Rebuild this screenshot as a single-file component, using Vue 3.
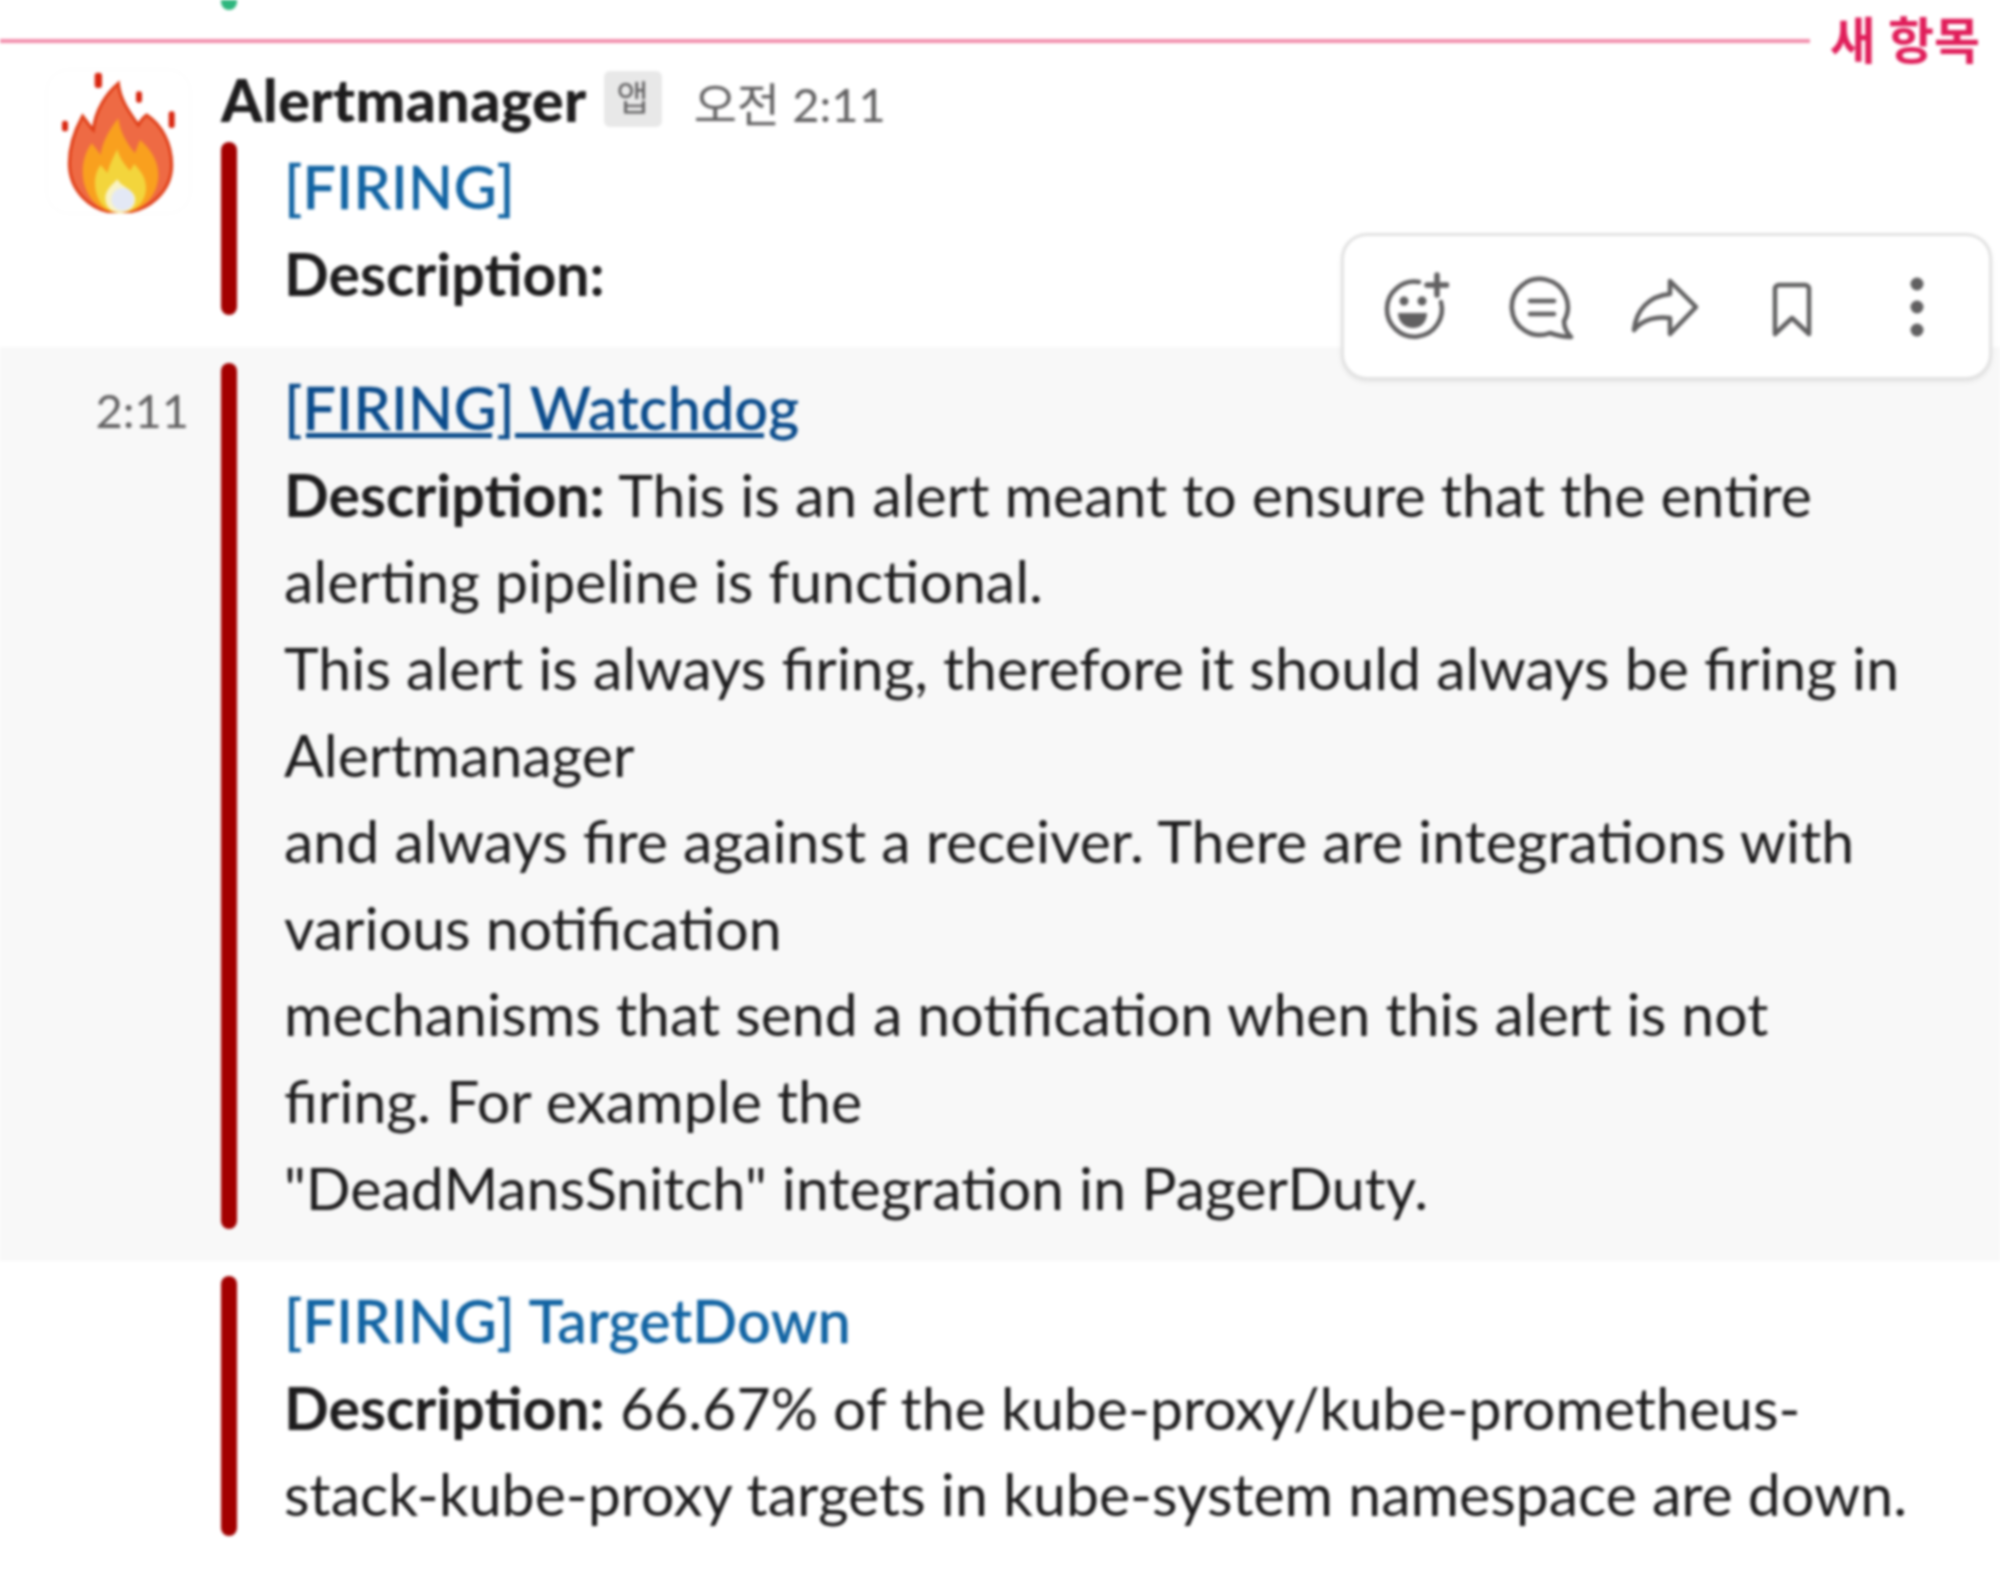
<template>
  <div class="page">
    <div class="prev-bar"></div>

    <div class="divider">
      <span class="divider-line"></span>
      <span class="divider-label">새 항목</span>
    </div>

    <div class="msg msg-first">
      <div class="gutter">
        <div class="avatar">
          <svg viewBox="51 60 429 429" width="143" height="143">
            <g fill="#d8260f">
              <rect x="194" y="68" width="22" height="46" rx="9" />
              <rect x="318" y="124" width="18" height="34" rx="8" />
              <rect x="96" y="212" width="18" height="32" rx="8" />
              <rect x="416" y="184" width="18" height="50" rx="8" />
            </g>
            <path fill="#ee6a44" stroke="#df3d17" stroke-width="9" d="M268 488C180 488 118 420 118 340C118 290 135 240 158 198C170 215 180 230 190 240C195 180 230 130 265 100C270 150 300 190 325 225C332 212 340 202 350 195C395 225 425 280 425 345C425 425 355 488 268 488Z" />
            <path fill="#f9a01e" d="M270 488C200 488 158 430 158 365C158 330 170 300 185 280C195 292 205 305 212 315C215 280 240 235 265 205C270 250 295 285 315 310C320 295 325 282 330 270C365 300 385 335 385 375C385 440 335 488 270 488Z" />
            <path fill="#f3d53c" d="M270 488C225 488 195 450 195 400C195 380 200 360 212 345C220 355 228 362 232 370C238 345 250 320 262 298C268 325 285 345 300 362C305 355 308 350 312 342C335 365 348 385 348 415C348 455 315 488 270 488Z" />
            <path fill="#f9f3c4" d="M270 488C240 488 226 466 226 444C226 424 240 410 262 388C272 410 316 420 316 448C316 470 298 488 270 488Z" />
            <circle cx="278" cy="448" r="34" fill="#e3e8f5" />
          </svg>
        </div>
      </div>
      <div class="body">
        <div class="head">
          <span class="name">Alertmanager</span>
          <span class="badge">앱</span>
          <span class="time">오전 2:11</span>
        </div>
        <div class="attach">
          <div class="bar"></div>
          <div class="text">
            <a class="link">[FIRING]</a>
            <p><b>Description:</b></p>
          </div>
        </div>
      </div>
    </div>

    <div class="msg msg-hover">
      <div class="gutter">
        <span class="stamp">2:11</span>
      </div>
      <div class="body">
        <div class="attach">
          <div class="bar"></div>
          <div class="text">
            <a class="link link-hover">[FIRING] Watchdog</a>
            <p>
              <b>Description:</b> This is an alert meant to ensure that the entire alerting pipeline is functional.<br>
              This alert is always firing, therefore it should always be firing in Alertmanager<br>
              and always fire against a receiver. There are integrations with various notification<br>
              mechanisms that send a notification when this alert is not firing. For example the<br>
              "DeadMansSnitch" integration in PagerDuty.
            </p>
          </div>
        </div>
      </div>
    </div>

    <div class="msg msg-last">
      <div class="gutter"></div>
      <div class="body">
        <div class="attach">
          <div class="bar"></div>
          <div class="text">
            <a class="link">[FIRING] TargetDown</a>
            <p><b>Description:</b> 66.67% of the kube-proxy/kube-prometheus-stack-kube-proxy targets in kube-system namespace are down.</p>
          </div>
        </div>
      </div>
    </div>

    <div class="toolbar">
      <svg class="tool" viewBox="0 0 72 72">
        <path d="M42 10A27.5 27.5 0 1 0 64 30" />
        <path class="plus" d="M60 3V23M50 13H70" />
        <circle class="solid" cx="27" cy="29" r="4.5" />
        <circle class="solid" cx="45" cy="29" r="4.5" />
        <path class="solid" d="M21 41H50C50 50 44 56 36 56C28 56 21 50 21 41Z" />
      </svg>
      <svg class="tool" viewBox="-3 0 72 72">
        <path d="M44 61A28 28 0 1 1 58 49C58 55 60 60 65 65C58 65 50 63 44 61Z" />
        <path d="M24 29H48M24 42H48" />
      </svg>
      <svg class="tool" viewBox="0 0 72 72">
        <path d="M41 9L67 35L41 62V46C28 44 14 47 5 58C7 38 20 24 41 22Z" />
      </svg>
      <svg class="tool" viewBox="0 0 72 72">
        <path d="M20 62V17A4 4 0 0 1 24 13H50A4 4 0 0 1 54 17V62L37 46Z" />
      </svg>
      <svg class="tool" viewBox="0 0 72 72">
        <circle class="solid" cx="36" cy="12" r="6.5" />
        <circle class="solid" cx="36" cy="35" r="6.5" />
        <circle class="solid" cx="36" cy="58" r="6.5" />
      </svg>
    </div>
  </div>
</template>

<script setup>
</script>

<style>
html,
body {
  background: #fff;
}
</style>

<style scoped>
.page {
  position: relative;
  width: 2000px;
  height: 1571px;
  overflow: hidden;
  background: #fff;
  color: #1d1c1d;
  font-family: Lato, "Noto Sans CJK KR", sans-serif;
  font-size: 59px;
  line-height: 86.6px;
  filter: blur(1.4px);
}

.prev-bar {
  width: 16px;
  height: 10px;
  margin-left: 221px;
  background: #2eb67d;
  border-radius: 0 0 8px 8px;
}

.divider {
  display: flex;
  align-items: flex-start;
  gap: 20px;
  height: 46px;
  padding-right: 20px;
}

.divider-line {
  flex: 1;
  height: 4px;
  margin-top: 29px;
  background: #f28dab;
}

.divider-label {
  margin-top: 6px;
  font-size: 50px;
  line-height: 48px;
  font-weight: 700;
  color: #e01e5a;
}

.msg {
  display: flex;
}

.msg-first {
  padding-bottom: 32px;
}

.msg-hover {
  padding: 16px 0 32px;
  background: #f8f8f8;
}

.msg-last {
  padding-top: 15px;
}

.gutter {
  flex: none;
  width: 221px;
}

.avatar {
  box-sizing: border-box;
  width: 143px;
  height: 143px;
  margin: 14px 0 0 47px;
  border-radius: 22px;
  box-shadow: 0 0 0 1px #fafafa;
}

.avatar svg {
  display: block;
}

.stamp {
  display: block;
  padding: 4px 32px 0 0;
  text-align: right;
  font-size: 47px;
  color: #616061;
}

.body {
  flex: 1;
  min-width: 0;
}

.head {
  display: flex;
  align-items: flex-start;
  height: 86px;
}

.name {
  margin-top: 1px;
  font-weight: 900;
  letter-spacing: 0.4px;
}

.badge {
  width: 58px;
  height: 56px;
  margin: 15px 0 0 17px;
  border-radius: 6px;
  background: #e8e8e8;
  color: #616061;
  text-align: center;
  font-size: 35px;
  line-height: 52px;
}

.time {
  margin: 5px 0 0 32px;
  font-size: 47px;
  color: #616061;
}

.attach {
  display: flex;
  gap: 47px;
  padding-right: 85px;
}

.bar {
  flex: none;
  width: 16px;
  background: #a30000;
  border-radius: 8px;
}

.text {
  min-width: 0;
  margin: 2px 0 -2px;
}

.text p {
  margin: 0;
}

.text b {
  font-weight: 700;
}

.link {
  display: block;
  color: #1264a3;
  font-weight: 500;
  letter-spacing: 0.37px;
  -webkit-text-stroke: 0.4px currentColor;
}

.link-hover {
  color: #0b4c8c;
  text-decoration: underline;
}

.toolbar {
  position: absolute;
  top: 233px;
  right: 8px;
  display: flex;
  gap: 54px;
  box-sizing: border-box;
  width: 651px;
  height: 147px;
  padding: 36px 33px;
  background: #fff;
  border: 3px solid #e2e2e2;
  border-radius: 26px;
  box-shadow: 0 2px 4px rgba(0, 0, 0, 0.08);
}

.tool {
  flex: none;
  width: 72px;
  height: 72px;
  fill: none;
  stroke: #616061;
  stroke-width: 4.5;
  stroke-linejoin: round;
  stroke-linecap: round;
}

.tool .plus {
  stroke-width: 5.5;
}

.tool .solid {
  fill: #616061;
  stroke: none;
}
</style>
